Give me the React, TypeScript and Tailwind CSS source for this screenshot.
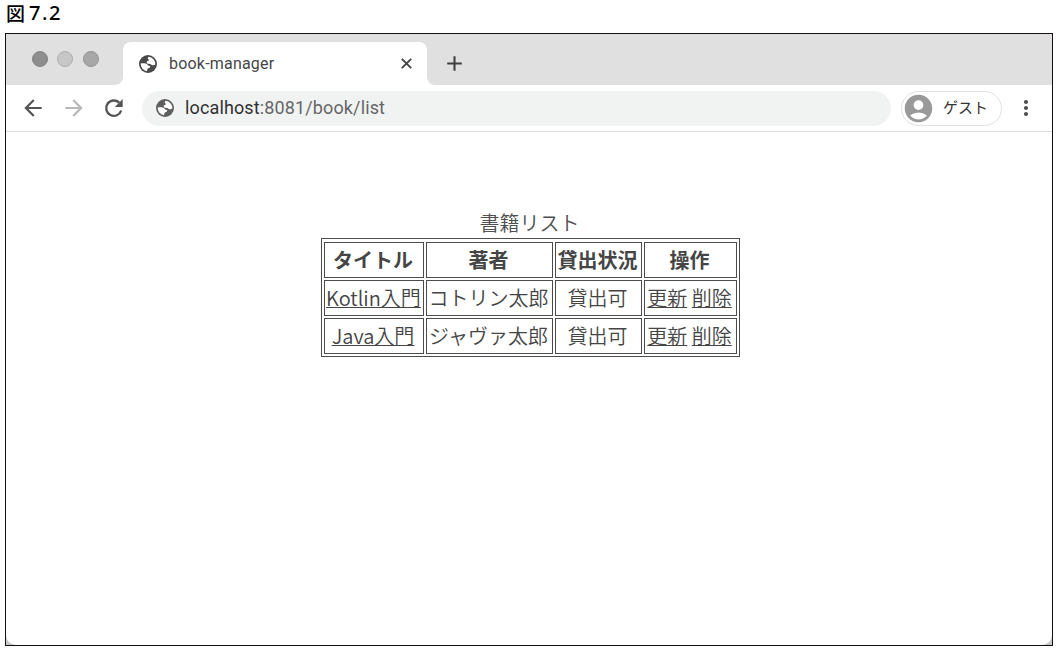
import { MdArrowBack, MdArrowForward, MdAdd, MdMoreVert, MdAccountCircle } from "react-icons/md";

const books = [
  { title: "Kotlin入門", author: "コトリン太郎", status: "貸出可" },
  { title: "Java入門", author: "ジャヴァ太郎", status: "貸出可" },
];

function Globe({ className }: { className: string }) {
  return (
    <svg viewBox="0 0 18 18" className={className}>
      <circle cx="9" cy="9" r="9" fill="currentColor" />
      <path
        d="M9.600 1.800C8.600 2.800 8.400 3.900 9.500 4.400C10.300 4.800 9.900 5.500 8.600 5.900C7.300 6.400 7.300 8.200 9 8.700L11.400 8.900C12.800 10.400 14.900 10.700 16.300 9.400A7.300 7.300 0 0 0 9.600 1.800ZM1.700 8.500C2.600 8.200 3.500 8.100 5.200 8.300C7.500 8.500 9 9.300 8.900 10.500L11 11.100C11.600 12.600 10.500 13.100 9.400 13.200C8.400 13.500 8.400 14.600 7.900 16.200A7.300 7.300 0 0 1 1.700 8.500Z"
        fill="white"
      />
    </svg>
  );
}

function Reload() {
  return (
    <svg viewBox="0 0 20 20" className="ml-[17px] size-5 text-[#555]">
      <path d="M17.200 12.500A7.700 7.700 0 1 1 15.200 4.600" fill="none" stroke="currentColor" strokeWidth="2.400" />
      <path d="M18.700 1v7.900h-7.900Z" fill="currentColor" />
    </svg>
  );
}

function Tab() {
  return (
    <div className="relative mt-2 flex h-[43px] w-[304px] items-center rounded-t-[8px] bg-white pl-4 pr-[15px]">
      <svg viewBox="0 0 8 8" className="absolute -left-2 bottom-0 size-2 text-white">
        <path d="M8 0v8H0A8 8 0 0 0 8 0Z" fill="currentColor" />
      </svg>
      <svg viewBox="0 0 8 8" className="absolute -right-2 bottom-0 size-2 text-white">
        <path d="M0 0v8h8A8 8 0 0 1 0 0Z" fill="currentColor" />
      </svg>
      <Globe className="size-[18px] text-[#4a4a4a]" />
      <span className="ml-3 whitespace-nowrap font-['Roboto',sans-serif] text-[16px] tracking-[0.2px] text-[#464646]">
        book-manager
      </span>
      <svg viewBox="0 0 11 11" className="ml-auto size-[11px] text-[#444]">
        <path d="M.8.800 10.200 10.200M10.200.800.800 10.200" stroke="currentColor" strokeWidth="1.900" />
      </svg>
    </div>
  );
}

const cell = "whitespace-nowrap border border-[#4c4c4c] pl-px pr-[3px] py-px";
const link = "underline decoration-1 underline-offset-[1px] [text-decoration-skip-ink:none]";

export default function App() {
  return (
    <div className="h-[652px] w-[1058px] overflow-hidden bg-white font-['Noto_Sans_CJK_JP',sans-serif]">
      <h1 className="flex h-[33px] items-start pl-[6px] pt-[2px] text-[19px] font-medium leading-[22px] text-black">
        図<span className="ml-[4px] font-['Noto_Sans',sans-serif] text-[20px] tracking-[1.6px]">7.2</span>
      </h1>
      <div className="ml-[5px] flex h-[613px] w-[1048px] flex-col border border-[#161013] bg-[#c8c8c8]">
        <div className="flex min-h-0 flex-1 flex-col overflow-hidden rounded-b-[10px] bg-white">
          <div className="flex h-[51px] shrink-0 bg-[#e0e0e0]">
            <div className="flex w-[117px] gap-[9.5px] pl-[25.5px] pt-[16.5px]">
              <span className="size-4 rounded-full border border-[#818181] bg-[#8e8e8e]" />
              <span className="size-4 rounded-full border border-[#aeaeae] bg-[#c7c7c7]" />
              <span className="size-4 rounded-full border border-[#929292] bg-[#a7a7a7]" />
            </div>
            <Tab />
            <MdAdd className="ml-[15px] mt-[17px] size-[25px] text-[#3f3f3f]" />
          </div>
          <div className="flex h-[47px] shrink-0 items-center border-b border-[#dcdcdc] pl-[14px]">
            <MdArrowBack className="size-[26px] text-[#555]" />
            <MdArrowForward className="ml-[15px] size-[26px] text-[#b8b8b8]" />
            <Reload />
            <div className="ml-[18px] flex h-[35px] w-[749px] items-center rounded-full bg-[#f1f3f3] pl-[14px]">
              <Globe className="size-[18px] text-[#5f5f5f]" />
              <span className="ml-[11px] pb-px font-['Roboto',sans-serif] text-[18px] tracking-[0.13px] text-[#666]">
                <span className="text-[#303030]">localhost</span>:8081/book/list
              </span>
            </div>
            <div className="ml-[10px] flex h-[35px] w-[101px] items-center rounded-full border border-[#e0e0e0]">
              <MdAccountCircle className="size-[33px] text-[#999]" />
              <span className="ml-[8px] pb-px text-[15px] text-[#333]">ゲスト</span>
            </div>
            <MdMoreVert className="ml-[12px] size-[24px] text-[#4c4c4c]" />
          </div>
          <main className="flex flex-col items-center pl-[3px] pt-[76px] text-[20px] leading-[32px] text-[#454545]">
            <table className="w-[419px] table-fixed border-separate border-spacing-[2px] border border-[#4c4c4c] pt-px">
              <caption className="h-[30px] pr-[2px] leading-[30px] font-[350] text-[#505050]">書籍リスト</caption>
              <colgroup>
                <col className="w-[100px]" />
                <col className="w-[127px]" />
                <col className="w-[87px]" />
                <col className="w-[93px]" />
              </colgroup>
              <thead>
                <tr className="h-[36px]">
                  {["タイトル", "著者", "貸出状況", "操作"].map((label) => (
                    <th key={label} className={`${cell} font-bold`}>
                      {label}
                    </th>
                  ))}
                </tr>
              </thead>
              <tbody>
                {books.map((book) => (
                  <tr key={book.title} className="h-[36px] text-center font-[350]">
                    <td className={cell}>
                      <a className={link}>{book.title}</a>
                    </td>
                    <td className={cell}>{book.author}</td>
                    <td className={cell}>{book.status}</td>
                    <td className={cell}>
                      <a className={link}>更新</a>{" "}
                      <a className={link}>削除</a>
                    </td>
                  </tr>
                ))}
              </tbody>
            </table>
          </main>
        </div>
      </div>
    </div>
  );
}
